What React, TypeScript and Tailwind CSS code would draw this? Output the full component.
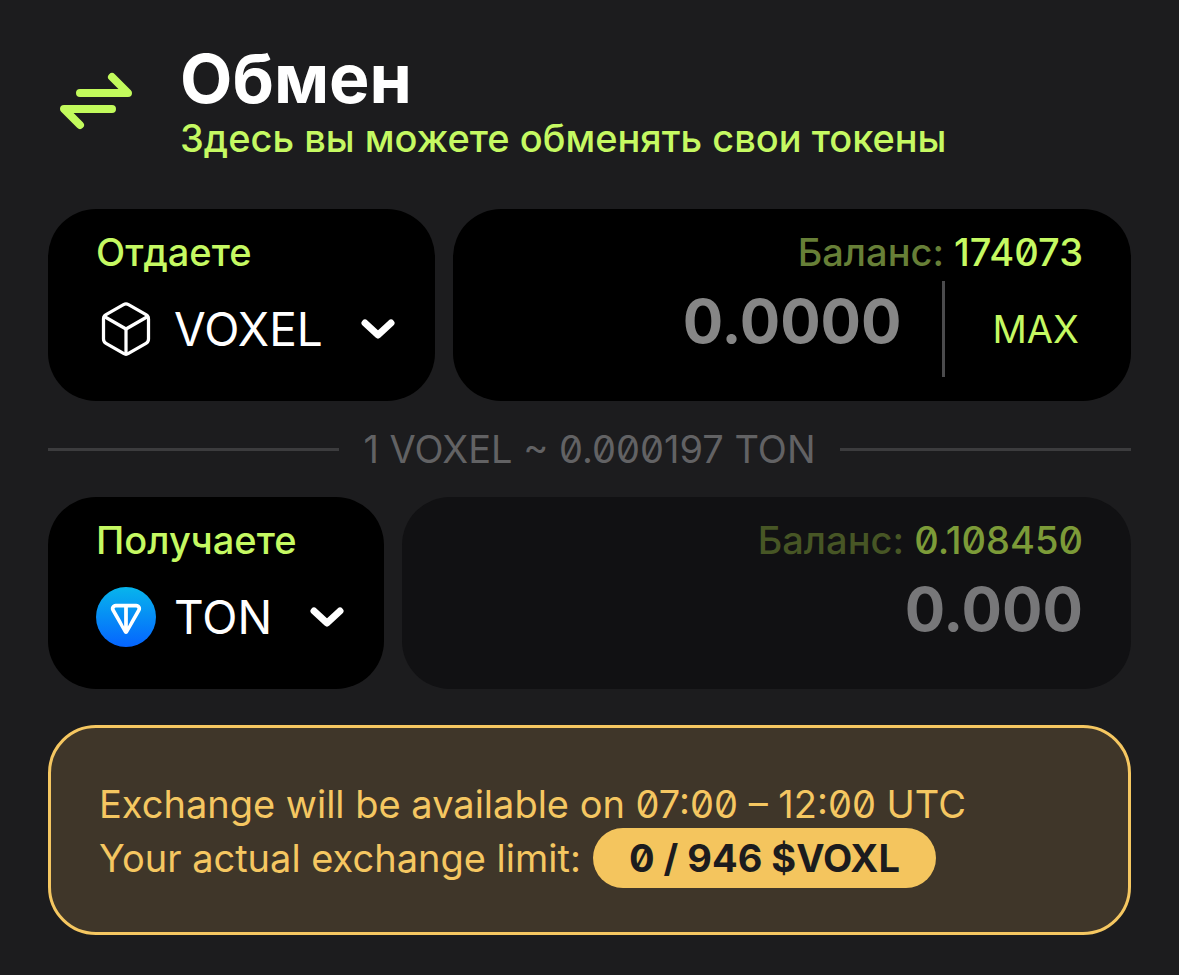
import React, { useState } from 'react';
import { Box } from 'lucide-react';

const SwapIcon: React.FC = () => (
  <svg viewBox="0 0 96 96" className="size-24 shrink-0" fill="none" stroke="#c2fa5c" strokeWidth="8" strokeLinecap="round" strokeLinejoin="round" aria-hidden="true">
    <path d="M32 39H80L64 23" />
    <path d="M64 55H16L32 71" />
  </svg>
);

const ChevronIcon: React.FC = () => (
  <svg viewBox="0 0 34 20" className="pointer-events-none absolute right-0 w-[34px] h-5" fill="none" stroke="#fff" strokeWidth="7" strokeLinecap="round" strokeLinejoin="round" aria-hidden="true">
    <path d="M4 4L17 16L30 4" />
  </svg>
);

const TonIcon: React.FC = () => (
  <svg viewBox="0 0 56 56" className="size-[60px] shrink-0" aria-hidden="true">
    <defs>
      <linearGradient id="ton" x1="0" y1="0" x2="0" y2="1">
        <stop offset="0" stopColor="#07b5ec" />
        <stop offset="1" stopColor="#0564ff" />
      </linearGradient>
    </defs>
    <circle cx="28" cy="28" r="28" fill="url(#ton)" />
    <path
      fill="#fff"
      d="M37.56 15.63H18.44C14.92 15.63 12.69 19.42 14.46 22.49L26.26 42.94C27.03 44.28 28.96 44.28 29.73 42.94L41.54 22.49C43.3 19.43 41.08 15.63 37.56 15.63ZM26.25 36.81L23.68 31.83L17.48 20.74C17.07 20.03 17.58 19.12 18.44 19.12H26.25V36.81ZM38.51 20.74L32.31 31.84L29.74 36.81V19.12H37.56C38.41 19.12 38.92 20.03 38.51 20.74Z"
    />
  </svg>
);

interface TokenCardProps {
  id: string;
  label: string;
  token: string;
  onChange: (token: string) => void;
}

const TokenCard: React.FC<TokenCardProps> = ({ id, label, token, onChange }) => (
  <div className="shrink-0 rounded-[48px] bg-black pt-[19px] pb-6 pl-12 pr-10">
    <label htmlFor={id} className="block h-12 leading-[48px] text-[#c5f962]">{label}</label>
    <div className="mt-[5px] flex h-24 items-center gap-[18px]">
      {token === 'VOXEL' ? <Box size={60} strokeWidth={1.3} color="#fff" className="shrink-0" aria-hidden="true" /> : <TonIcon />}
      <div className="relative flex items-center">
        <select
          id={id}
          value={token}
          onChange={e => onChange(e.target.value)}
          className="field-sizing-content appearance-none bg-transparent pr-[72px] text-[46px] leading-[60px] font-normal text-white outline-none"
        >
          <option value="VOXEL">VOXEL</option>
          <option value="TON">TON</option>
        </select>
        <ChevronIcon />
      </div>
    </div>
  </div>
);

const App: React.FC = () => {
  const [fromToken, setFromToken] = useState('VOXEL');
  const [toToken, setToToken] = useState('TON');
  const [amount, setAmount] = useState('');

  return (
    <main className="min-h-screen bg-[#1c1c1e] px-12 pt-[42px] pb-10 font-['Inter','Liberation_Sans',sans-serif] text-[38px] font-medium slashed-zero">
      <header className="flex items-center gap-9">
        <SwapIcon />
        <div>
          <h1 className="text-[68px] leading-[73px] font-bold text-white">Обмен</h1>
          <p className="leading-[46px] text-[#c5f962]">Здесь вы можете обменять свои токены</p>
        </div>
      </header>

      <section className="mt-12 flex gap-[18px]">
        <TokenCard id="from-token" label="Отдаете" token={fromToken} onChange={setFromToken} />
        <div className="min-w-0 flex-1 rounded-[48px] bg-black pt-[19px] pb-6 pr-12 pl-12">
          <p className="h-12 text-right leading-[48px] text-[#c5f962]">
            <span className="text-[#677f37]">Баланс:</span> 174073
          </p>
          <div className="mt-[5px] flex h-24">
            <input
              type="text"
              inputMode="decimal"
              aria-label="Отдаете, сумма"
              placeholder="0.0000"
              value={amount}
              onChange={e => setAmount(e.target.value)}
              className="h-20 min-w-0 flex-1 bg-transparent text-right text-[60px] font-bold normal-nums text-white outline-none placeholder:text-[#868686]"
            />
            <button type="button" onClick={() => setAmount('174073')} className="ml-10 border-l-[3px] border-[#4b4b4d] pr-1 pl-12 font-normal text-[#c5f962]">
              MAX
            </button>
          </div>
        </div>
      </section>

      <div className="flex h-24 items-center gap-6 text-[#626264]">
        <div className="h-[3px] flex-1 bg-[#3c3c3e]" />
        <p className="font-normal">1 VOXEL ~ 0.000197 TON</p>
        <div className="h-[3px] flex-1 bg-[#3c3c3e]" />
      </div>

      <section className="flex gap-[18px]">
        <TokenCard id="to-token" label="Получаете" token={toToken} onChange={setToToken} />
        <div className="min-w-0 flex-1 rounded-[48px] bg-[#111113] pt-[19px] pb-6 pr-12 pl-12">
          <p className="h-12 text-right leading-[48px] text-[#7c9b38]">
            <span className="text-[#475625]">Баланс:</span> 0.108450
          </p>
          <div className="mt-[5px] flex h-24">
            <input
              type="text"
              disabled
              aria-label="Получаете, сумма"
              placeholder="0.000"
              className="h-20 min-w-0 flex-1 bg-transparent text-right text-[60px] font-bold normal-nums outline-none placeholder:text-[#777779]"
            />
          </div>
        </div>
      </section>

      <section className="mt-9 rounded-[48px] border-[3px] border-[#f5c761] bg-[#3f3629] px-12 pt-[49px] pb-[47px] text-[#f5c761]">
        <p className="leading-[54px] font-normal">Exchange will be available on 07:00 – 12:00 UTC</p>
        <p className="flex h-[54px] items-center gap-3 font-normal">
          Your actual exchange limit:
          <strong className="rounded-full bg-[#f4c55e] px-9 leading-[60px] font-bold text-[#1c1c1e]">0 / 946 $VOXL</strong>
        </p>
      </section>
    </main>
  );
};

export default App;
